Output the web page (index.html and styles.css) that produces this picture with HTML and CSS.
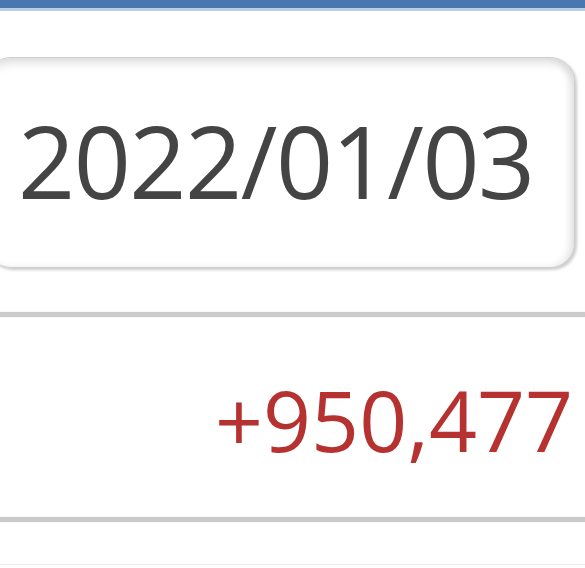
FILE: index.html
```html
<!DOCTYPE html>
<html>
<head>
<meta charset="utf-8">
<link rel="stylesheet" href="styles.css">
</head>
<body>
<div class="topbar"></div>
<div class="datebox"><span class="date">2022/01/03</span></div>
<div class="rule rule-first"></div>
<div class="amount-row"><span class="amount">+950,477</span></div>
<div class="rule"></div>
<div class="faint"></div>
</body>
</html>
```
FILE: styles.css
```css
html, body {
  margin: 0;
  padding: 0;
  background: #ffffff;
  overflow: hidden;
}
body {
  width: 585px;
  height: 568px;
  font-family: "Open Sans", "Noto Sans", sans-serif;
  display: flex;
  flex-direction: column;
}
.topbar {
  height: 8px;
  background: #4a77b0;
  border-bottom: 3px solid #b7cfe8;
  flex: none;
}
.datebox {
  flex: none;
  margin-top: 46px;
  margin-left: -14px;
  width: 589px;
  height: 211px;
  box-sizing: border-box;
  border: 1px solid #cfcfcf;
  border-radius: 25px;
  background: #ffffff;
  box-shadow: inset 0 6px 9px rgba(0,0,0,0.10), inset -5px 0 7px rgba(0,0,0,0.07), 2px 2px 3px rgba(0,0,0,0.2);
  display: flex;
  align-items: center;
  padding-left: 31px;
}
.date {
  font-size: 100px;
  line-height: 1;
  color: #444444;
  letter-spacing: -1.5px;
  position: relative;
  top: -3px;
}
.rule {
  flex: none;
  height: 5px;
  background: #cacaca;
  box-shadow: 0 0 2px rgba(0,0,0,0.10);
}
.rule-first {
  margin-top: 44px;
}
.amount-row {
  flex: none;
  height: 200px;
  display: flex;
  align-items: center;
  justify-content: flex-end;
  padding-right: 12px;
}
.amount {
  font-size: 84px;
  line-height: 1;
  color: #b63230;
  position: relative;
  top: 3px;
}
.faint {
  flex: none;
  margin-top: 42px;
  height: 1px;
  background: #ececec;
}
```
